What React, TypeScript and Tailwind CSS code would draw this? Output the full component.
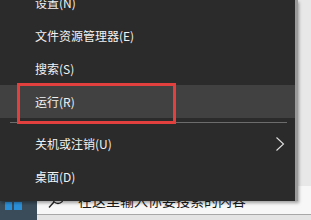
const font = { fontFamily: '"Noto Sans CJK SC", "Liberation Sans", sans-serif' };

function MenuRow({ label, h = "h-[33px]", active, submenu }: { label: string; h?: string; active?: boolean; submenu?: boolean }) {
  return (
    <div className={`${h} flex items-center justify-between pl-[35px] pr-[10px] ${active ? "bg-[#414141]" : ""}`}>
      <span className="text-[12px] leading-none text-[#f2f2f2]">{label}</span>
      {submenu && (
        <svg width="10" height="16" viewBox="0 0 10 16">
          <path d="M1.5 1.5 L8.5 8 L1.5 14.5" fill="none" stroke="#e0e0e0" strokeWidth="1.1" />
        </svg>
      )}
    </div>
  );
}

export default function App() {
  return (
    <div className="relative h-[220px] w-[311px] overflow-hidden bg-[#e8e8e8]" style={font}>
      <div className="flex h-full flex-col">
        <div className="flex-1" />
        {/* taskbar strip */}
        <div className="flex h-[34px]">
          <div className="relative w-[37px] bg-[#3a4c5a]">
            <div className="absolute left-[5px] top-[8px] grid grid-cols-2 gap-[1px]">
              <div className="h-[7px] w-[7px] bg-[#2b8fd8]" />
              <div className="h-[7px] w-[8px] bg-[#2b8fd8]" />
              <div className="h-[8px] w-[7px] bg-[#2b8fd8]" />
              <div className="h-[8px] w-[8px] bg-[#2b8fd8]" />
            </div>
          </div>
          <div className="flex flex-1 flex-col">
            <div className="flex h-[29px] items-center border-b border-[#a8a8a8] bg-[#f7f7f7]">
              <svg width="18" height="18" viewBox="0 0 18 18" className="ml-[10px]">
                <circle cx="11" cy="7" r="5.5" fill="none" stroke="#222" strokeWidth="1.3" />
                <path d="M7 11 L2 16.5" stroke="#222" strokeWidth="1.4" />
              </svg>
              <span className="ml-[13px] text-[14px] leading-none text-[#1a1a1a]">在这里输入你要搜索的内容</span>
            </div>
            <div className="flex-1 bg-[#e4e4e4]" />
          </div>
        </div>
      </div>

      {/* context menu overlay */}
      <div className="absolute left-0 top-0 h-[201px] w-[298px] border-r-[3px] border-[#9a9a9a] bg-[#2b2b2b] shadow-[1px_2px_3px_rgba(0,0,0,0.35)]">
        <div className="-mt-[14px] flex flex-col">
          <MenuRow label="设置(N)" />
          <MenuRow label="文件资源管理器(E)" />
          <MenuRow label="搜索(S)" />
          <MenuRow label="运行(R)" active />
          <div className="my-[4px] ml-[10px] mr-[8px] h-px bg-[#6c6c6c]" />
          <MenuRow label="关机或注销(U)" submenu />
          <MenuRow label="桌面(D)" h="h-[34px]" />
        </div>
      </div>

      {/* red highlight box */}
      <div className="absolute left-[17px] top-[83px] h-[41px] w-[159px] border-[3px] border-[#e2403f]" />
    </div>
  );
}
